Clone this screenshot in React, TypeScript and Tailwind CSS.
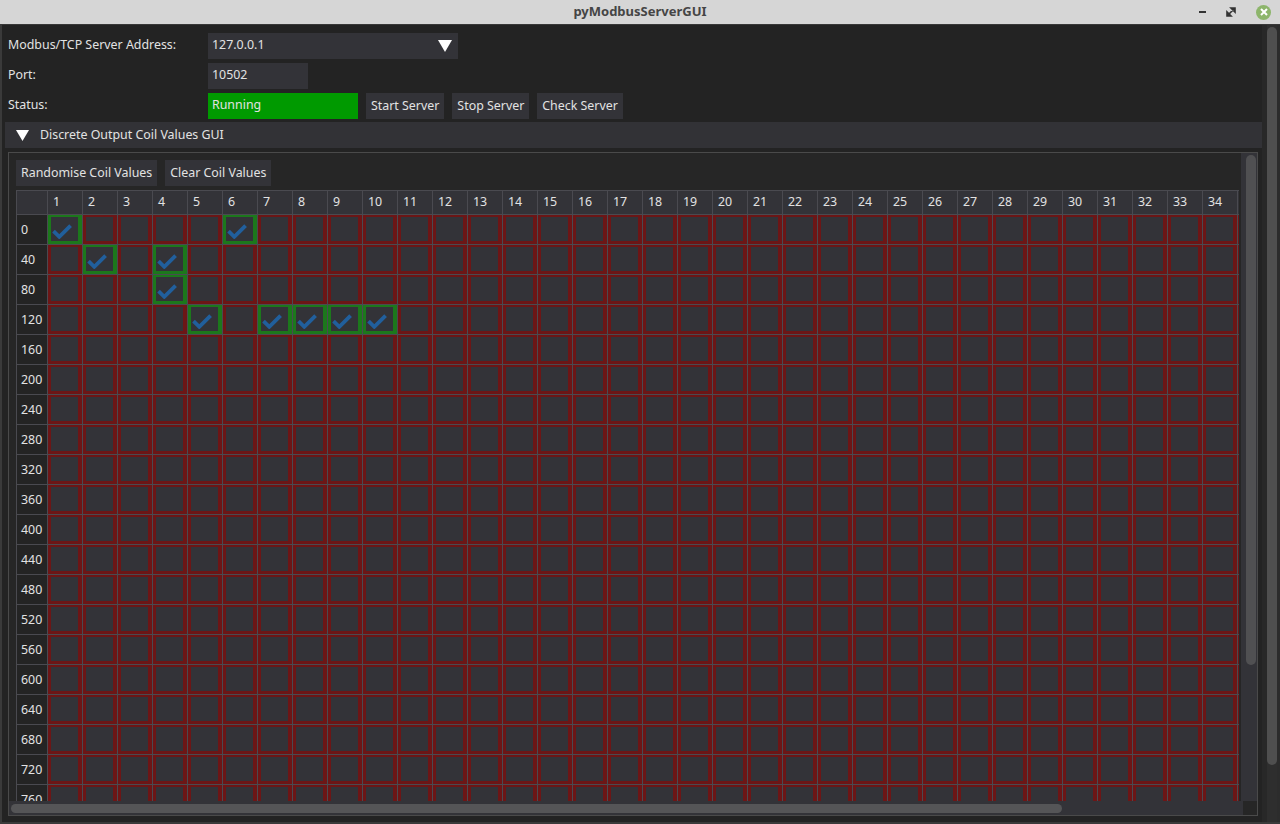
import React from "react";

const ROW_LABELS = Array.from({ length: 20 }, (_, i) => i * 40);
const COLS = Array.from({ length: 35 }, (_, i) => i + 1);

// which coils are on, keyed by row index
const CHECKED: Record<number, number[]> = {
  0: [1, 6],
  1: [2, 4],
  2: [4],
  3: [5, 7, 8, 9, 10],
};

function Check() {
  return (
    <svg width="20" height="15" viewBox="0 0 20 15" className="block">
      <path d="M1.5 7.2 L7.3 12.8 L18.6 1.6" fill="none" stroke="#215f9c" strokeWidth="3.8" />
    </svg>
  );
}

function Cell({ on }: { on: boolean }) {
  return (
    <div className="w-[35px] h-[30px] shrink-0 border-r border-b border-[#4a4a50] bg-[#333338]">
      <div
        className={`w-full h-full border-t-2 border-l-[3px] border-r-4 border-b-[3px] pl-[1px] pt-[7px] ${
          on ? "border-[#1c781c]" : "border-[#6c1616]"
        }`}
      >
        {on && <Check />}
      </div>
    </div>
  );
}

function TitleBar() {
  return (
    <div className="h-[25px] shrink-0 bg-[#d6d6d6] border-b border-[#383838] relative flex items-center justify-center">
      <span className="text-[13px] font-bold text-[#454545]">pyModbusServerGUI</span>
      <div className="absolute right-[9px] top-0 h-[24px] flex items-center gap-[20px]">
        <div className="w-[7px] h-[2px] bg-[#333]" />
        <svg width="10" height="10" viewBox="0 0 10 10">
          <path d="M1 9 L1 5 L5 9 Z M9 1 L9 5 L5 1 Z M2 8 L8 2" fill="#333" stroke="#333" strokeWidth="1.6" />
        </svg>
        <div className="w-[15px] h-[15px] rounded-full bg-[#8db56b] flex items-center justify-center">
          <svg width="8" height="8" viewBox="0 0 8 8">
            <path d="M1 1 L7 7 M7 1 L1 7" stroke="#fff" strokeWidth="2" />
          </svg>
        </div>
      </div>
    </div>
  );
}

function Btn({ label }: { label: string }) {
  return <div className="h-[26px] px-[5px] pt-[1px] flex items-center bg-[#333338] whitespace-nowrap">{label}</div>;
}

function CoilTable() {
  return (
    <div className="border-l border-t border-[#4a4a50] w-max">
      <div className="flex h-[24px]">
        <div className="w-[31px] shrink-0 border-r border-b border-[#4a4a50] bg-[#333338]" />
        {COLS.map((c) => (
          <div
            key={c}
            className="w-[35px] shrink-0 border-r border-b border-[#4a4a50] bg-[#333338] pl-[5px] flex items-center"
          >
            {c < 35 ? c : ""}
          </div>
        ))}
      </div>
      {ROW_LABELS.map((label, r) => (
        <div key={label} className="flex h-[30px]">
          <div className="w-[31px] shrink-0 border-r border-b border-[#4a4a50] bg-[#242424] pl-[4px] pt-[1px] flex items-center">
            {label}
          </div>
          {COLS.map((c) => (
            <Cell key={c} on={(CHECKED[r] || []).includes(c)} />
          ))}
        </div>
      ))}
    </div>
  );
}

export default function App() {
  return (
    <div className="w-[1280px] h-[824px] overflow-hidden flex flex-col bg-[#232323] text-[12.4px] text-[#e2e2e2] font-['Noto_Sans',sans-serif]">
      <TitleBar />
      <div className="flex-1 min-h-0 flex border-l-2 border-b-2 border-[#3a3a3a]">
        <div className="flex-1 min-w-0 flex flex-col pl-[3px] pt-[7px] pb-[6px]">
          {/* server settings */}
          <div className="flex flex-col gap-[4px] pl-[3px]">
            <div className="flex items-center h-[26px] pt-[1px]">
              <div className="w-[200px]">Modbus/TCP Server Address:</div>
              <div className="w-[250px] h-[26px] bg-[#333338] flex items-center justify-between pl-[4px] pr-[6px]">
                <span>127.0.0.1</span>
                <svg width="14" height="12" viewBox="0 0 14 12">
                  <path d="M0 0 H14 L7 12 Z" fill="#fff" />
                </svg>
              </div>
            </div>
            <div className="flex items-center h-[26px] pt-[1px]">
              <div className="w-[200px]">Port:</div>
              <div className="w-[100px] h-[26px] bg-[#333338] flex items-center pl-[4px]">10502</div>
            </div>
            <div className="flex items-center h-[26px] gap-[8px] pt-[1px]">
              <div className="w-[192px]">Status:</div>
              <div className="w-[150px] h-[26px] bg-[#009a00] flex items-center pl-[4px]">Running</div>
              <Btn label="Start Server" />
              <Btn label="Stop Server" />
              <Btn label="Check Server" />
            </div>
          </div>

          {/* collapsible section header */}
          <div className="mt-[4px] h-[26px] bg-[#323236] flex items-center pl-[11px] gap-[11px]">
            <svg width="13" height="11" viewBox="0 0 13 11">
              <path d="M0 0 H13 L6.5 11 Z" fill="#fff" />
            </svg>
            <span className="pt-[1px]">Discrete Output Coil Values GUI</span>
          </div>

          {/* coil panel */}
          <div className="mt-[4px] ml-[3px] mr-[4px] flex-1 min-h-0 border border-[#4a4a4a] flex flex-col bg-[#262626]">
            <div className="flex-1 min-h-0 flex">
              <div className="flex-1 min-w-0 overflow-hidden pl-[7px] pt-[7px] pr-[2px]">
                <div className="flex gap-[8px]">
                  <Btn label="Randomise Coil Values" />
                  <Btn label="Clear Coil Values" />
                </div>
                <div className="mt-[4px] overflow-hidden">
                  <CoilTable />
                </div>
              </div>
              <div className="w-[16px] shrink-0 bg-[#333338] pl-[5px] pt-[2px]">
                <div className="w-[10px] h-[510px] rounded-full bg-[#505052]" />
              </div>
            </div>
            <div className="h-[14px] shrink-0 flex">
              <div className="flex-1 bg-[#333338] pl-[2px] pt-[3px]">
                <div className="w-[1051px] h-[9px] rounded-full bg-[#555557]" />
              </div>
              <div className="w-[14px] bg-[#262626]" />
            </div>
          </div>
        </div>

        {/* window scrollbar */}
        <div className="w-[18px] shrink-0 flex">
          <div className="w-[5px] bg-[#282828]" />
          <div className="w-[10px] pt-[2px] bg-[#2e2e2e]">
            <div className="w-[10px] h-[738px] rounded-full bg-[#4f4f4f]" />
          </div>
          <div className="w-[3px] bg-[#2c2c2c]" />
        </div>
      </div>
    </div>
  );
}
